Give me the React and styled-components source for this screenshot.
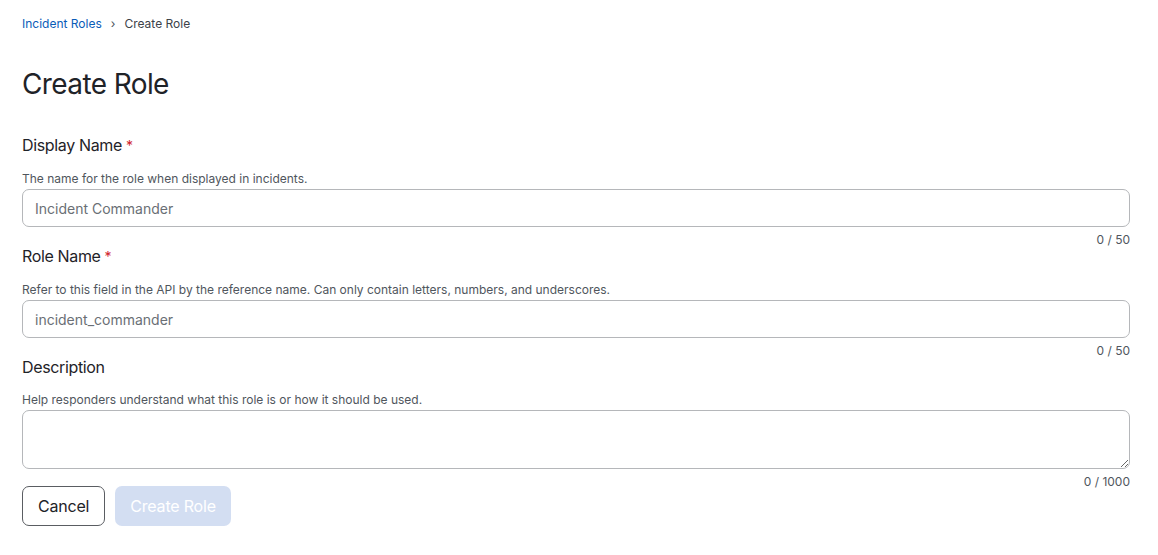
import React from "react";
import styled, { createGlobalStyle } from "styled-components";

const Global = createGlobalStyle`
  html, body { margin: 0; padding: 0; background: #fff; }
  body { font-family: Inter, "Noto Sans", sans-serif; color: #1f2328; }
  * { box-sizing: border-box; }
`;

const Page = styled.div`
  padding: 16px 28px 0 22px;
  display: flex;
  flex-direction: column;
`;

const Breadcrumb = styled.nav`
  display: flex;
  align-items: center;
  gap: 9px;
  font-size: 12px;
  line-height: 16px;
  color: #3d4249;
`;

const Crumb = styled.a`
  color: ${(p) => (p.$link ? "#0a5cb8" : "#3d4249")};
  text-decoration: none;
`;

const Sep = styled.span`
  font-size: 12px;
  color: #4a4f55;
`;

const Title = styled.h1`
  margin: 35px 0 0;
  font-size: 28px;
  line-height: 34px;
  font-weight: 400;
  color: #1f2328;
  letter-spacing: -0.6px;
`;

const Form = styled.form`
  display: flex;
  flex-direction: column;
  margin-top: 34px;
`;

const Field = styled.div`
  display: flex;
  flex-direction: column;
`;

const Label = styled.label`
  font-size: 16px;
  line-height: 20px;
  color: #1f2328;
  letter-spacing: -0.35px;
`;

const Req = styled.span`
  color: #d0232b;
  margin-left: 4px;
  font-size: 14px;
`;

const Help = styled.div`
  margin-top: 15px;
  font-size: 12px;
  line-height: 16px;
  color: #50565d;
`;

const Input = styled.input`
  margin-top: 2px;
  height: 38px;
  width: 100%;
  border: 1px solid #b5b7ba;
  border-radius: 7px;
  padding: 0 12px;
  font-family: inherit;
  font-size: 14px;
  color: #1f2328;
  background: #fff;
  outline: none;
  &::placeholder { color: #6a6f75; }
`;

const TextArea = styled.textarea`
  margin-top: 2px;
  height: 59px;
  width: 100%;
  border: 1px solid #b5b7ba;
  border-radius: 7px;
  padding: 8px 12px;
  font-family: inherit;
  font-size: 14px;
  resize: vertical;
  outline: none;
  display: block;
`;

const Counter = styled.div`
  align-self: flex-end;
  margin-top: 5px;
  font-size: 12px;
  line-height: 16px;
  color: #50565d;
  margin-bottom: -2px;
`;

const Actions = styled.div`
  display: flex;
  gap: 10px;
  margin-top: -2px;
`;

const Button = styled.button`
  height: 40px;
  padding: 0 15px;
  border-radius: 7px;
  font-family: inherit;
  font-size: 16px;
  letter-spacing: -0.2px;
  ${(p) =>
    p.$primary
      ? `background: #d3def2; color: #fff; border: none;`
      : `background: #fff; color: #1f2328; border: 1px solid #5a5d62;`}
`;

export default function App() {
  return (
    <>
      <Global />
      <Page>
        <Breadcrumb>
          <Crumb $link href="#">Incident Roles</Crumb>
          <Sep>›</Sep>
          <Crumb>Create Role</Crumb>
        </Breadcrumb>
        <Title>Create Role</Title>
        <Form>
          <Field>
            <Label>
              Display Name<Req>*</Req>
            </Label>
            <Help>The name for the role when displayed in incidents.</Help>
            <Input placeholder="Incident Commander" />
            <Counter>0 / 50</Counter>
          </Field>
          <Field>
            <Label>
              Role Name<Req>*</Req>
            </Label>
            <Help>
              Refer to this field in the API by the reference name. Can only contain letters, numbers, and underscores.
            </Help>
            <Input placeholder="incident_commander" />
            <Counter>0 / 50</Counter>
          </Field>
          <Field>
            <Label>Description</Label>
            <Help>Help responders understand what this role is or how it should be used.</Help>
            <TextArea />
            <Counter>0 / 1000</Counter>
          </Field>
          <Actions>
            <Button type="button">Cancel</Button>
            <Button type="button" $primary disabled>
              Create Role
            </Button>
          </Actions>
        </Form>
      </Page>
    </>
  );
}
